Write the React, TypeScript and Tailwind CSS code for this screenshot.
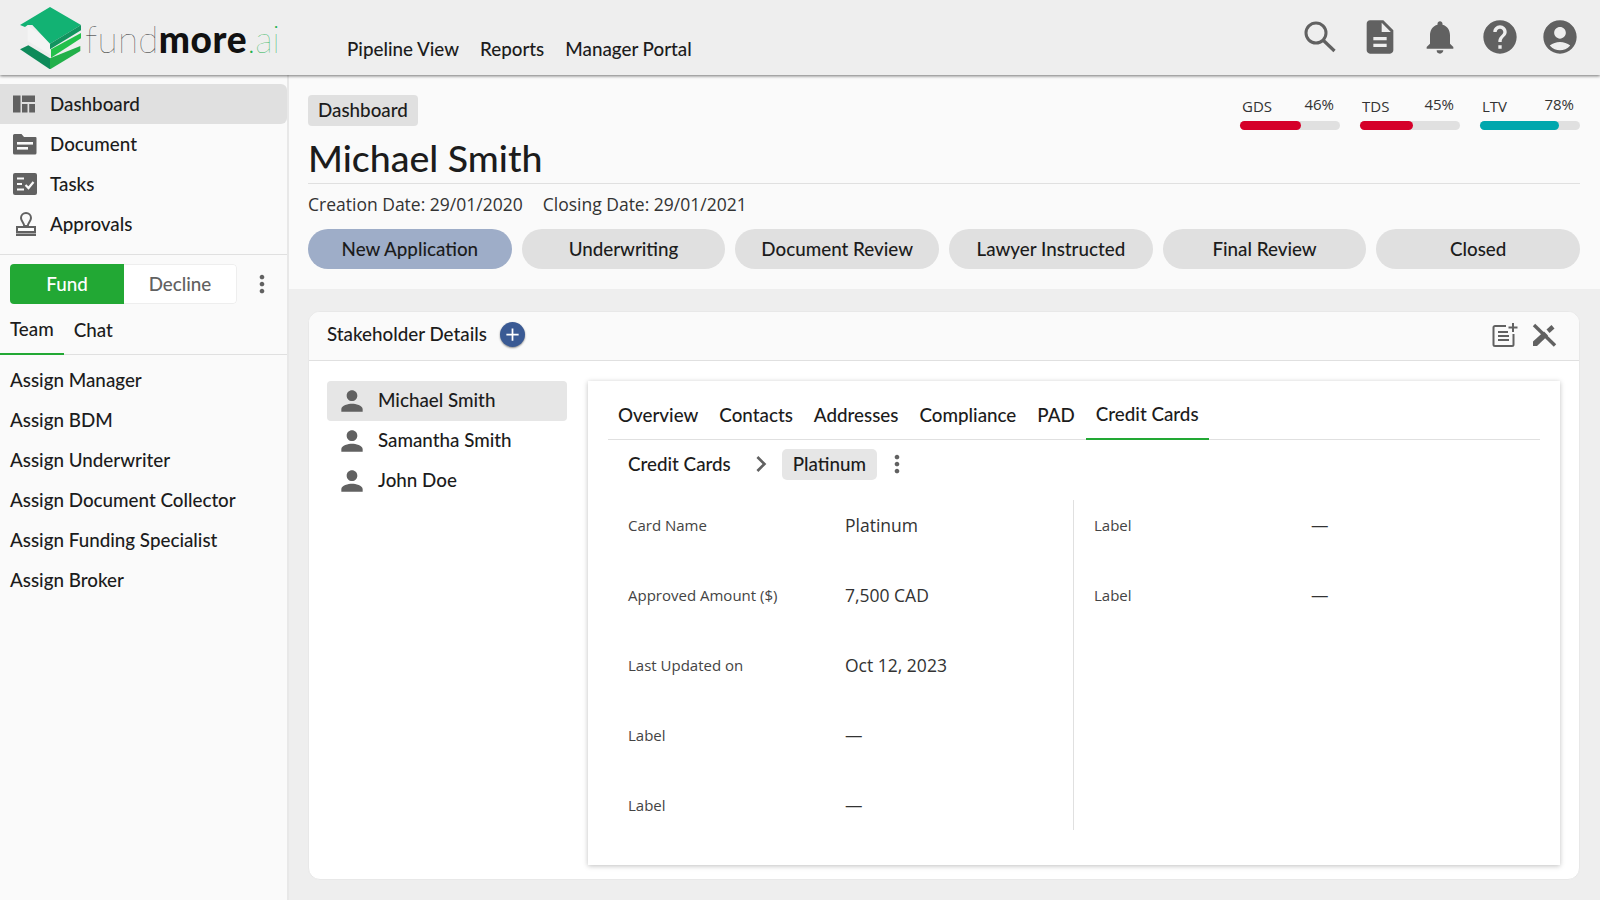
import { MdAdd, MdChevronRight, MdDescription, MdHelp, MdMoreVert, MdNotifications, MdAccountCircle, MdPerson } from 'react-icons/md';

const stages = ['New Application', 'Underwriting', 'Document Review', 'Lawyer Instructed', 'Final Review', 'Closed'];
const assigns = ['Assign Manager', 'Assign BDM', 'Assign Underwriter', 'Assign Document Collector', 'Assign Funding Specialist', 'Assign Broker'];
const tabs = ['Overview', 'Contacts', 'Addresses', 'Compliance', 'PAD', 'Credit Cards'];
const people = ['Michael Smith', 'Samantha Smith', 'John Doe'];
const details = [
  ['Card Name', 'Platinum'],
  ['Approved Amount ($)', '7,500 CAD'],
  ['Last Updated on', 'Oct 12, 2023'],
  ['Label', '—'],
  ['Label', '—'],
];

const heading = "font-['Lato','Liberation_Sans',sans-serif]";
const body = "font-['Open_Sans','Liberation_Sans',sans-serif]";

function Logo() {
  return (
    <svg width="62" height="63" viewBox="15 15 186 189" className="shrink-0">
      <polygon points="38,75 105,120 105,160 38,120" fill="#f4f4f4" />
      <polygon points="15,72 105,18 198,72 105,128 52,72 38,72 30,78" fill="#12b273" />
      <polygon points="198,72 198,88 105,145 105,128" fill="#12945f" />
      <polygon points="108,145 198,96 198,112 108,170" fill="#22c04a" />
      <polygon points="15,145 40,133 105,172 105,205" fill="#0e8a5a" />
      <polygon points="105,172 196,135 196,150 105,205" fill="#22b04a" />
    </svg>
  );
}

function DashboardIcon() {
  return (
    <svg width="24" height="24" viewBox="0 0 24 24" fill="#616161">
      <rect x="1" y="3.5" width="7.5" height="17" />
      <rect x="10" y="3.5" width="13" height="6.5" />
      <rect x="10" y="12" width="5.5" height="8.5" />
      <rect x="17.2" y="12" width="5.8" height="8.5" />
    </svg>
  );
}

function FolderIcon() {
  return (
    <svg width="26" height="24" viewBox="0 0 26 24">
      <path d="M2.5 2h7l2.5 3h11.5a1 1 0 0 1 1 1v15a1.5 1.5 0 0 1-1.5 1.5H2.5A1.5 1.5 0 0 1 1 21V3.5A1.5 1.5 0 0 1 2.5 2z" fill="#616161" />
      <rect x="5" y="10" width="16" height="2.6" fill="#fafafa" />
      <rect x="5" y="15" width="11" height="2.6" fill="#fafafa" />
    </svg>
  );
}

function TasksIcon() {
  return (
    <svg width="26" height="24" viewBox="0 0 26 24">
      <rect x="1" y="1" width="24" height="22" rx="2" fill="#616161" />
      <path d="M5 6.5h7M5 12h5M5 17.5h7" stroke="#fafafa" strokeWidth="2" />
      <path d="M13.5 13l3 3 5-6" stroke="#fafafa" strokeWidth="2.2" fill="none" />
    </svg>
  );
}

function StampIcon() {
  return (
    <svg width="24" height="26" viewBox="0 0 24 26" fill="none">
      <path d="M12 2a5 5 0 0 0-5 5c0 3 3.2 5 3.2 8h3.6c0-3 3.2-5 3.2-8a5 5 0 0 0-5-5z" stroke="#616161" strokeWidth="2" />
      <rect x="3" y="16" width="18" height="5" stroke="#616161" strokeWidth="2" />
      <rect x="2" y="22.5" width="20" height="2.5" fill="#616161" />
    </svg>
  );
}

function SearchIcon() {
  return (
    <svg width="40" height="40" viewBox="0 0 40 40" fill="none">
      <circle cx="16" cy="16" r="10" stroke="#616161" strokeWidth="3" />
      <path d="M23.500 23.500l11 10.500" stroke="#616161" strokeWidth="3.2" />
    </svg>
  );
}

function NoteAddIcon() {
  return (
    <svg width="26" height="26" viewBox="0 0 26 26" fill="none">
      <path d="M14 4H3a1.5 1.5 0 0 0-1.5 1.5v17A1.5 1.5 0 0 0 3 24h17a1.5 1.5 0 0 0 1.5-1.5V12" stroke="#616161" strokeWidth="2" />
      <path d="M6 10h10M6 14h11M6 18h11" stroke="#616161" strokeWidth="2" />
      <path d="M21 1v9M16.500 5.500h9" stroke="#616161" strokeWidth="2" />
    </svg>
  );
}

function ToolsIcon() {
  return (
    <svg width="26" height="26" viewBox="0 0 26 26" fill="none">
      <path d="M3 3l21 20.500" stroke="#616161" strokeWidth="3.4" />
      <path d="M2 19.500L13 9.500l4 4L6 24H2z" fill="#616161" />
      <path d="M15.500 7.500L20.500 3l3 3.500-5 4.500z" fill="#616161" />
    </svg>
  );
}

function Metric({ label, value, fill, pct }: { label: string; value: string; fill: string; pct: number }) {
  return (
    <div className="w-[100px]">
      <div className={`flex items-start justify-between pl-0.5 pr-1.5 text-[15px] leading-[20px] text-[#333] ${body}`}>
        <span className="mt-0.5">{label}</span>
        <span>{value}</span>
      </div>
      <div className="mt-[5px] h-[9px] rounded-full bg-[#e0e0e0]">
        <div className="h-full rounded-full" style={{ width: `${pct}%`, backgroundColor: fill }} />
      </div>
    </div>
  );
}

export default function App() {
  return (
    <div className={`flex h-[900px] w-[1600px] flex-col overflow-hidden bg-[#eeeeee] text-[#1c1c1c] ${heading}`}>
      <header className="z-10 flex h-[75px] shrink-0 items-center bg-[#eeeeee] pl-5 pr-5 shadow-[0_1px_3px_rgba(0,0,0,0.55)]">
        <Logo />
        <div className="ml-[3px] mt-[1px] w-[200px] whitespace-nowrap text-[37px] leading-none tracking-[0.3px]">
          <span className="font-extralight text-[#222]">fund</span>
          <span className="font-black tracking-[0.6px] text-[#111]">more</span>
          <span className="font-extralight tracking-[-0.5px] text-[#22b14c]">.ai</span>
        </div>
        <nav className="ml-[62px] mt-6 flex gap-[21px] text-[18.8px] font-medium">
          <span>Pipeline View</span>
          <span>Reports</span>
          <span>Manager Portal</span>
        </nav>
        <div className="-mt-0.5 ml-auto flex gap-5 text-[#616161]">
          <SearchIcon />
          <MdDescription size={40} />
          <MdNotifications size={40} />
          <MdHelp size={40} />
          <MdAccountCircle size={40} />
        </div>
      </header>

      <div className="flex min-h-0 flex-1">
        <aside className="w-[289px] shrink-0 border-r-2 border-[#e8e8e8] bg-[#fafafa] pt-[9px] text-[18.8px] font-medium">
          <div className="border-b border-[#e0e0e0] pb-2.5">
            <div className="flex h-10 items-center gap-3 rounded-r-md bg-[#e0e0e0] pl-3">
              <DashboardIcon />
              <span className="pl-[2px]">Dashboard</span>
            </div>
            <div className="flex h-10 items-center gap-3 pl-3">
              <FolderIcon />
              <span>Document</span>
            </div>
            <div className="flex h-10 items-center gap-3 pl-3">
              <TasksIcon />
              <span>Tasks</span>
            </div>
            <div className="flex h-10 items-center gap-3 pl-3.5">
              <StampIcon />
              <span>Approvals</span>
            </div>
          </div>
          <div className="flex items-center pl-2.5 pt-[9px]">
            <div className="flex h-10 w-[227px] overflow-hidden rounded-[4px] bg-white">
              <div className="flex w-[114px] items-center justify-center bg-[#22a834] text-white">Fund</div>
              <div className="flex flex-1 items-center justify-center rounded-r-[4px] border border-l-0 border-[#eeeeee] text-[#616161]">Decline</div>
            </div>
            <MdMoreVert size={28} className="ml-[11px] text-[#616161]" />
          </div>
          <div className="flex h-[51px] items-end gap-2.5 border-b border-[#e0e0e0]">
            <span className="-mb-px border-b-2 border-[#22a834] pb-[10px] pl-2.5 pr-2.5">Team</span>
            <span className="pb-[10px]">Chat</span>
          </div>
          <div className="pt-[5px]">
            {assigns.map((a) => (
              <div key={a} className="flex h-10 items-center pl-2.5">{a}</div>
            ))}
          </div>
        </aside>

        <main className="min-w-0 flex-1">
          <section className="h-[214px] bg-[#fafafa] pl-[19px] pr-5 pt-5">
            <div className="flex h-[38px] items-start justify-between">
              <div className="flex h-[31px] items-center rounded-[4px] bg-[#e0e0e0] px-2.5 text-[18.8px] font-medium">Dashboard</div>
              <div className="-mt-px flex gap-5">
                <Metric label="GDS" value="46%" fill="#d50029" pct={61} />
                <Metric label="TDS" value="45%" fill="#d50029" pct={53} />
                <Metric label="LTV" value="78%" fill="#00a7ad" pct={79} />
              </div>
            </div>
            <h1 className="-mt-[2px] border-b border-[#e0e0e0] pb-[2px] pt-[3px] text-[37.500px] font-medium leading-[47px]">Michael Smith</h1>
            <div className={`mt-[7px] flex gap-5 text-[17.5px] leading-[26px] text-[#333] ${body}`}>
              <span>Creation Date: 29/01/2020</span>
              <span>Closing Date: 29/01/2021</span>
            </div>
            <div className="mt-3 flex gap-2.5">
              {stages.map((s, i) => (
                <div
                  key={s}
                  className={`flex h-10 flex-1 items-center justify-center rounded-full text-[18.8px] font-medium ${i === 0 ? 'bg-[#9eadc8]' : 'bg-[#e0e0e0]'}`}
                >
                  {s}
                </div>
              ))}
            </div>
          </section>

          <section className="pb-5 pl-[19px] pr-5 pt-[22px]">
            <div className="h-[569px] overflow-hidden rounded-xl border border-[#e8e8e8] bg-white">
              <div className="flex h-[49px] items-center border-b border-[#e0e0e0] bg-[#fafafa] pb-[3px] pl-[18px] pr-[22px]">
                <span className="text-[18.8px] font-medium">Stakeholder Details</span>
                <span className="ml-[13px] flex h-[25px] w-[25px] items-center justify-center rounded-full bg-[#3a5a94] text-white shadow-[0_1px_2px_rgba(0,0,0,0.45)]">
                  <MdAdd size={21} />
                </span>
                <div className="ml-auto flex gap-[13px]">
                  <NoteAddIcon />
                  <ToolsIcon />
                </div>
              </div>
              <div className="flex pl-[18px] pr-[19px] pt-5">
                <div className="w-[240px] shrink-0 text-[18.8px] font-medium">
                  {people.map((p, i) => (
                    <div key={p} className={`flex h-10 items-center gap-[10px] rounded-[4px] pl-[9px] ${i === 0 ? 'bg-[#e6e6e6]' : ''}`}>
                      <MdPerson size={32} className="text-[#616161]" />
                      <span className="pb-0.5">{p}</span>
                    </div>
                  ))}
                </div>
                <div className="ml-[21px] h-[484px] flex-1 bg-white px-5 shadow-[0_1px_5px_rgba(0,0,0,0.25)]">
                  <div className="flex h-[59px] gap-[1px] border-b border-[#e0e0e0] text-[18.8px] font-medium">
                    {tabs.map((t) => (
                      <div
                        key={t}
                        className={`flex items-center px-2.5 pt-[10px] ${t === 'Credit Cards' ? '-mb-px border-b-2 border-[#22a834]' : ''}`}
                      >
                        {t}
                      </div>
                    ))}
                  </div>
                  <div className="flex h-[48px] items-center pl-5 text-[18.8px] font-medium">
                    <span>Credit Cards</span>
                    <MdChevronRight size={32} className="ml-[14px] text-[#616161]" />
                    <span className="ml-[5px] flex h-[31px] items-center rounded-[5px] bg-[#e6e6e6] px-[11px]">Platinum</span>
                    <MdMoreVert size={28} className="ml-1.5 text-[#616161]" />
                  </div>
                  <div className={`mt-[12px] flex ${body}`}>
                    <div className="h-[330px] w-[466px] shrink-0 border-r border-[#e0e0e0] pl-5">
                      {details.map(([k, v], i) => (
                        <div key={i} className="flex h-[70px] items-center pb-[20px]">
                          <span className="w-[217px] text-[15px] text-[#444]">{k}</span>
                          <span className="text-[17.5px] text-[#333]">{v}</span>
                        </div>
                      ))}
                    </div>
                    <div className="pl-5">
                      {['Label', 'Label'].map((k, i) => (
                        <div key={i} className="flex h-[70px] items-center pb-[20px]">
                          <span className="w-[217px] text-[15px] text-[#444]">{k}</span>
                          <span className="text-[17.5px] text-[#333]">—</span>
                        </div>
                      ))}
                    </div>
                  </div>
                </div>
              </div>
            </div>
          </section>
        </main>
      </div>
    </div>
  );
}
